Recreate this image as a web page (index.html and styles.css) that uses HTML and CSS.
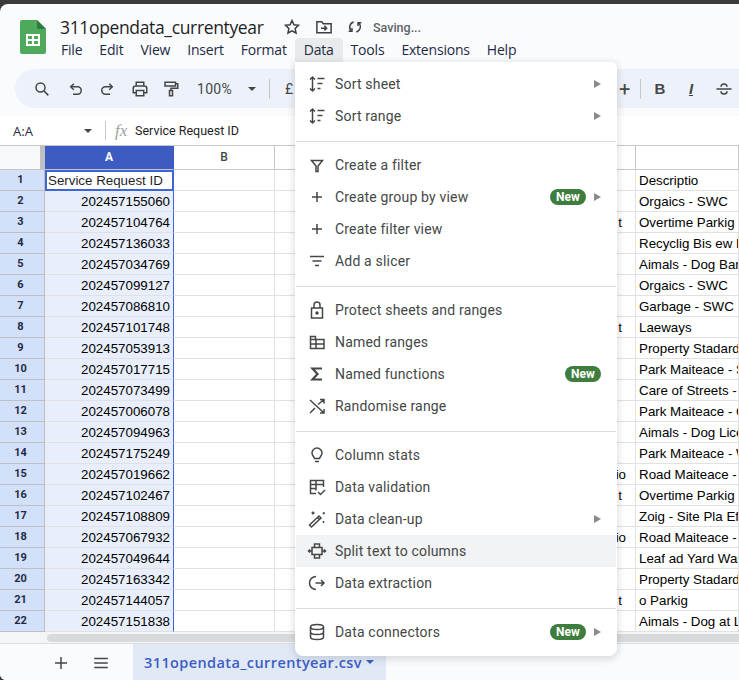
FILE: index.html
```html
<!DOCTYPE html>
<html lang="en">
<head>
    <meta charset="UTF-8">
    <meta name="viewport" content="width=device-width, initial-scale=1.0">
    <title>311opendata_currentyear</title>
    <link rel="stylesheet" href="styles.css">
</head>
<body>
<div class="app">
    <header class="topbar">
        <svg class="logo" width="26" height="34" viewBox="0 0 26 34">
            <path d="M2 0H17L26 9V32a2 2 0 0 1-2 2H2a2 2 0 0 1-2-2V2a2 2 0 0 1 2-2z" fill="#4ea95b"/>
            <path d="M17 0L26 9H19a2 2 0 0 1-2-2z" fill="#2c7a3f"/>
            <path d="M6 14H20V26H6zM8 16V19H12V16zM14 16V19H18V16zM8 21V24H12V21zM14 21V24H18V21z" fill="#fff" fill-rule="evenodd"/>
        </svg>
        <div class="topbar-text">
            <div class="title-row">
                <span class="doc-title">311opendata_currentyear</span>
                <svg class="star" width="18" height="18" viewBox="0 0 24 24" fill="none" stroke="#3c4043" stroke-width="2"><path d="M12 3.500l2.600 5.600 6.100.7-4.500 4.200 1.200 6-5.400-3-5.400 3 1.200-6-4.500-4.200 6.100-.7z"/></svg>
                <svg class="move" width="18" height="18" viewBox="0 0 24 24" fill="none" stroke="#3c4043" stroke-width="2"><path d="M2.500 19.500V5h6.500l2 2.500h10.500v12z"/><path d="M8 13.500h7M12.500 10.500l3 3-3 3"/></svg>
                <svg class="sync" width="16" height="16" viewBox="0 0 24 24" fill="none" stroke="#3c4043" stroke-width="2.200"><path d="M10 4.500a8 8 0 0 0-3.500 13.500M14 19.500a8 8 0 0 0 3.500-13.500"/><path d="M7.500 13.500v5h-5M16.500 10.500v-5h5"/></svg>
                <span class="saving">Saving...</span>
            </div>
            <nav class="menubar">
                <span>File</span>
                <span>Edit</span>
                <span>View</span>
                <span>Insert</span>
                <span>Format</span>
                <span class="active">Data</span>
                <span>Tools</span>
                <span>Extensions</span>
                <span>Help</span>
            </nav>
        </div>
    </header>

    <div class="toolbar">
        <span class="tool t-search"><svg width="20" height="20" viewBox="0 0 24 24" fill="none" stroke="#444746" stroke-width="2"><circle cx="10" cy="10" r="6"/><path d="M14.500 14.500L20.500 20.500"/></svg></span>
        <span class="tool t-undo"><svg width="18" height="18" viewBox="0 0 24 24" fill="none" stroke="#444746" stroke-width="2"><path d="M9 5L5 9l4 4"/><path d="M5 9h9a5 5 0 0 1 0 10H8"/></svg></span>
        <span class="tool t-redo"><svg width="18" height="18" viewBox="0 0 24 24" fill="none" stroke="#444746" stroke-width="2"><path d="M15 5l4 4-4 4"/><path d="M19 9h-9a5 5 0 0 0 0 10h6"/></svg></span>
        <span class="tool t-print"><svg width="18" height="18" viewBox="0 0 24 24" fill="none" stroke="#444746" stroke-width="2"><path d="M7 8V3h10v5M7 17H3v-6a3 3 0 0 1 3-3h12a3 3 0 0 1 3 3v6h-4"/><path d="M7 14h10v7H7z"/></svg></span>
        <span class="tool t-paint"><svg width="18" height="18" viewBox="0 0 24 24" fill="none" stroke="#444746" stroke-width="2"><path d="M4 3h14v5H4zM18 5h3v6h-9v3"/><path d="M10 14h4v7h-4z"/></svg></span>
        <span class="zoom-val">100%</span>
        <span class="caret"></span>
        <span class="tool-sep"></span>
        <span class="currency">£</span>
        <span class="toolbar-spacer"></span>
        <span class="tool-plus">+</span>
        <span class="tool-sep"></span>
        <span class="tool t-bold">B</span>
        <span class="tool t-italic">I</span>
        <span class="tool t-strike"><svg width="18" height="18" viewBox="0 0 24 24" fill="none" stroke="#444746" stroke-width="2"><path d="M2 12h20M8 9c0-5 8-5 8 0M8 15c0 5 8 5 8 0"/></svg></span>
    </div>

    <div class="formula-bar">
        <span class="name-box">A:A</span>
        <span class="caret"></span>
        <span class="formula-sep"></span>
        <span class="fx">fx</span>
        <span class="formula-text">Service Request ID</span>
    </div>

    <div class="grid">
        <div class="row head-row">
            <div class="corner"></div>
            <div class="col-a">A</div>
            <div class="col-b">B</div>
            <div class="col-c"></div>
            <div class="col-d"></div>
        </div>
        <div class="row first"><div class="num">1</div><div class="a selected">Service Request ID</div><div class="b"></div><div class="c"></div><div class="d">Descriptio</div></div>
        <div class="row"><div class="num">2</div><div class="a">202457155060</div><div class="b"></div><div class="c"></div><div class="d">Orgaics - SWC</div></div>
        <div class="row"><div class="num">3</div><div class="a">202457104764</div><div class="b"></div><div class="c">t</div><div class="d">Overtime Parkig</div></div>
        <div class="row"><div class="num">4</div><div class="a">202457136033</div><div class="b"></div><div class="c"></div><div class="d">Recyclig Bis ew Homes</div></div>
        <div class="row"><div class="num">5</div><div class="a">202457034769</div><div class="b"></div><div class="c"></div><div class="d">Aimals - Dog Barking</div></div>
        <div class="row"><div class="num">6</div><div class="a">202457099127</div><div class="b"></div><div class="c"></div><div class="d">Orgaics - SWC</div></div>
        <div class="row"><div class="num">7</div><div class="a">202457086810</div><div class="b"></div><div class="c"></div><div class="d">Garbage - SWC</div></div>
        <div class="row"><div class="num">8</div><div class="a">202457101748</div><div class="b"></div><div class="c">t</div><div class="d">Laeways</div></div>
        <div class="row"><div class="num">9</div><div class="a">202457053913</div><div class="b"></div><div class="c"></div><div class="d">Property Stadards</div></div>
        <div class="row"><div class="num">10</div><div class="a">202457017715</div><div class="b"></div><div class="c"></div><div class="d">Park Maiteace - Sports</div></div>
        <div class="row"><div class="num">11</div><div class="a">202457073499</div><div class="b"></div><div class="c"></div><div class="d">Care of Streets - Other</div></div>
        <div class="row"><div class="num">12</div><div class="a">202457006078</div><div class="b"></div><div class="c"></div><div class="d">Park Maiteace - Grass</div></div>
        <div class="row"><div class="num">13</div><div class="a">202457094963</div><div class="b"></div><div class="c"></div><div class="d">Aimals - Dog Licence</div></div>
        <div class="row"><div class="num">14</div><div class="a">202457175249</div><div class="b"></div><div class="c"></div><div class="d">Park Maiteace - Water</div></div>
        <div class="row"><div class="num">15</div><div class="a">202457019662</div><div class="b"></div><div class="c wide">io</div><div class="d">Road Maiteace - Other</div></div>
        <div class="row"><div class="num">16</div><div class="a">202457102467</div><div class="b"></div><div class="c">t</div><div class="d">Overtime Parkig</div></div>
        <div class="row"><div class="num">17</div><div class="a">202457108809</div><div class="b"></div><div class="c"></div><div class="d">Zoig - Site Pla Effect</div></div>
        <div class="row"><div class="num">18</div><div class="a">202457067932</div><div class="b"></div><div class="c wide">io</div><div class="d">Road Maiteace - Other</div></div>
        <div class="row"><div class="num">19</div><div class="a">202457049644</div><div class="b"></div><div class="c"></div><div class="d">Leaf ad Yard Waste</div></div>
        <div class="row"><div class="num">20</div><div class="a">202457163342</div><div class="b"></div><div class="c"></div><div class="d">Property Stadards</div></div>
        <div class="row"><div class="num">21</div><div class="a">202457144057</div><div class="b"></div><div class="c">t</div><div class="d">o Parkig</div></div>
        <div class="row"><div class="num">22</div><div class="a">202457151838</div><div class="b"></div><div class="c"></div><div class="d">Aimals - Dog at Large</div></div>
    </div>

    <div class="scrollbar"><div class="thumb"></div></div>

    <footer class="tabs">
        <svg class="add-sheet" width="18" height="18" viewBox="0 0 24 24" fill="none" stroke="#444746" stroke-width="2"><path d="M12 4v16M4 12h16"/></svg>
        <svg class="all-sheets" width="18" height="18" viewBox="0 0 24 24" fill="none" stroke="#444746" stroke-width="2"><path d="M3 6h18M3 12h18M3 18h18"/></svg>
        <div class="tab"><span>311opendata_currentyear.csv</span><i class="tab-caret"></i></div>
    </footer>

    <div class="menu">
        <div class="item">
            <svg viewBox="0 0 20 20"><path d="M5.500 3v14M3 5.500L5.500 3 8 5.500M3 14.500L5.500 17 8 14.500M10.500 4.500h7M10.500 9.500h5M10.500 14.500h3"/></svg>
            <span class="label">Sort sheet</span><i class="arrow"></i>
        </div>
        <div class="item">
            <svg viewBox="0 0 20 20"><path d="M5.500 3v14M3 5.500L5.500 3 8 5.500M3 14.500L5.500 17 8 14.500M10.500 4.500h7M10.500 9.500h5M10.500 14.500h3"/></svg>
            <span class="label">Sort range</span><i class="arrow"></i>
        </div>
        <hr>
        <div class="item">
            <svg viewBox="0 0 20 20"><path d="M4.500 5.500h11L11 11v5.500H9V11z"/></svg>
            <span class="label">Create a filter</span>
        </div>
        <div class="item">
            <svg viewBox="0 0 20 20"><path d="M10 5v10M5 10h10"/></svg>
            <span class="label">Create group by view</span><b class="badge">New</b><i class="arrow"></i>
        </div>
        <div class="item">
            <svg viewBox="0 0 20 20"><path d="M10 5v10M5 10h10"/></svg>
            <span class="label">Create filter view</span>
        </div>
        <div class="item">
            <svg viewBox="0 0 20 20"><path d="M3 5.500h14M5.500 10h9M8 14.500h4"/></svg>
            <span class="label">Add a slicer</span>
        </div>
        <hr>
        <div class="item">
            <svg viewBox="0 0 20 20"><path d="M4.500 8h11v10h-11zM7 8V5a3 3 0 0 1 6 0v3"/><circle cx="10" cy="13" r="1" fill="#444746"/></svg>
            <span class="label">Protect sheets and ranges</span>
        </div>
        <div class="item">
            <svg viewBox="0 0 20 20"><path d="M3.500 4.500h5v3h8.500v9H3.500zM3.500 7.500h5M3.500 12h13.500M9 7.500v9"/></svg>
            <span class="label">Named ranges</span>
        </div>
        <div class="item">
            <svg viewBox="0 0 20 20"><path class="thick" d="M15 4.500H5.500L10.500 10l-5 5.500H15"/></svg>
            <span class="label">Named functions</span><b class="badge end">New</b>
        </div>
        <div class="item">
            <svg viewBox="0 0 20 20"><path d="M3 4l14 13M3 17l5-5M11 8.500L17 3.500M13 3.500h4v4M17 13v4h-4"/></svg>
            <span class="label">Randomise range</span>
        </div>
        <hr>
        <div class="item">
            <svg viewBox="0 0 20 20"><path d="M7.500 13.500c0-1.500-2.500-2.500-2.500-5.500a5 5 0 0 1 10 0c0 3-2.500 4-2.500 5.500zM8 16.500h4"/></svg>
            <span class="label">Column stats</span>
        </div>
        <div class="item">
            <svg viewBox="0 0 20 20"><path d="M9 16.500H3.500v-13h13V10M3.500 7.500h13M3.500 11.500h6M9 3.500v10M11 15l2.500 2.500 4.500-4.500"/></svg>
            <span class="label">Data validation</span>
        </div>
        <div class="item">
            <svg viewBox="0 0 20 20"><path d="M2.500 16L12 7l2 2-9.500 9z"/><path d="M10.500 8.500l2 2M6 2.500v3M4.500 4h3M16 3.500l1.500 1.500M17.500 3.500L16 5M16.500 12v2"/></svg>
            <span class="label">Data clean-up</span><i class="arrow"></i>
        </div>
        <div class="item hover">
            <svg viewBox="0 0 20 20"><path d="M7.500 6.500V3h5v3.500M7.500 13.500V17h5v-3.500M7.500 6.500H5v7h2.500M12.500 6.500H15v7h-2.500M7.500 6.500h5M7.500 13.500h5M5 10H1.500M3 8.500L1.500 10 3 11.500M15 10h3.500M17 8.500l1.500 1.500-1.500 1.500"/></svg>
            <span class="label">Split text to columns</span>
        </div>
        <div class="item">
            <svg viewBox="0 0 20 20"><path d="M9 3.500a6.500 6.500 0 0 0 0 13M8.500 10h8.500M14 7l3 3-3 3"/></svg>
            <span class="label">Data extraction</span>
        </div>
        <hr>
        <div class="item">
            <svg viewBox="0 0 20 20"><ellipse cx="10" cy="5" rx="6.500" ry="2.500"/><path d="M3.500 5v10c0 1.400 3 2.500 6.500 2.500s6.500-1.100 6.500-2.500V5M3.500 10c0 1.400 3 2.500 6.500 2.500s6.500-1.100 6.500-2.500"/></svg>
            <span class="label">Data connectors</span><b class="badge">New</b><i class="arrow"></i>
        </div>
    </div>
</div>
</body>
</html>
```

FILE: styles.css
```css
* {
    box-sizing: border-box;
}
html, body {
    margin: 0;
    height: 100%;
    background: #3b3b3b;
    overflow: hidden;
}
.app {
    position: relative;
    margin-top: 4px;
    height: 676px;
    display: flex;
    flex-direction: column;
    background: #f9fbfd;
    border-radius: 8px 0 0 6px;
    overflow: hidden;
    font-family: Roboto, "Liberation Sans", sans-serif;
    color: #1f1f1f;
}

/* title + menus */
.topbar {
    height: 65px;
    padding: 15px 0 0 20px;
    display: flex;
}
.logo {
    flex: none;
    margin-top: 1px;
}
.topbar-text {
    margin-left: 14px;
}
.title-row {
    display: flex;
    align-items: center;
    height: 16px;
}
.doc-title {
    font-family: "Open Sans", sans-serif;
    font-size: 17.500px;
    letter-spacing: -.35px;
    width: 204px;
    white-space: nowrap;
}
.star {
    margin-left: 19px;
}
.move {
    margin-left: 14px;
}
.sync {
    margin-left: 14px;
}
.saving {
    margin-left: 10px;
    font-size: 12.500px;
    color: #5f6368;
    font-weight: 500;
}
.menubar {
    display: flex;
    margin-top: 3px;
    margin-left: -8px;
    font-family: "Open Sans", sans-serif;
    font-size: 14px;
    color: #1f2a44;
}
.menubar span {
    height: 24px;
    line-height: 24px;
    padding: 0 9px;
    margin-right: -1px;
    border-radius: 4px 4px 0 0;
    letter-spacing: -.2px;
}
.menubar .active {
    background: #e8eaed;
}

/* toolbar */
.toolbar {
    height: 39px;
    margin-left: 15px;
    background: #edf2fa;
    border-radius: 20px 0 0 20px;
    display: flex;
    align-items: center;
    color: #444746;
    flex: none;
}
.tool {
    width: 18px;
    height: 20px;
    display: flex;
    align-items: center;
    justify-content: center;
    flex: none;
}
.t-search {
    margin-left: 18px;
}
.t-undo {
    margin-left: 16px;
}
.t-redo {
    margin-left: 13px;
}
.t-print {
    margin-left: 15px;
}
.t-paint {
    margin-left: 13px;
}
.zoom-val {
    margin-left: 17px;
    font-size: 14px;
    color: #444746;
    letter-spacing: .3px;
}
.caret {
    width: 0;
    height: 0;
    border-left: 4px solid transparent;
    border-right: 4px solid transparent;
    border-top: 4px solid #444746;
    flex: none;
}
.toolbar .caret {
    margin-left: 16px;
}
.tool-sep {
    width: 1px;
    height: 20px;
    background: #c7c7c7;
    margin-left: 13px;
    flex: none;
}
.currency {
    margin-left: 15px;
    font-size: 14px;
}
.toolbar-spacer {
    flex: 1;
}
.tool-plus {
    font-size: 20px;
    line-height: 20px;
    width: 14px;
}
.tool-plus + .tool-sep {
    margin-left: 7px;
}
.t-bold {
    margin-left: 10px;
    font-family: "Liberation Sans", sans-serif;
    font-weight: 700;
    font-size: 15px;
}
.t-italic {
    margin-left: 13px;
    font-family: "Liberation Sans", sans-serif;
    font-weight: 700;
    font-style: italic;
    font-size: 15px;
    text-decoration: underline;
    text-underline-offset: 1px;
}
.t-strike {
    margin-left: 15px;
    margin-right: 6px;
}

/* formula bar */
.formula-bar {
    height: 30px;
    margin-top: 8px;
    background: #fff;
    display: flex;
    align-items: center;
    border-bottom: 1px solid #c7c7c7;
    flex: none;
}
.name-box {
    margin-left: 13px;
    width: 71px;
    font-size: 13px;
    color: #1f2a44;
    font-family: "Open Sans", sans-serif;
}
.formula-sep {
    width: 1px;
    height: 19px;
    background: #c7c7c7;
    margin-left: 13px;
}
.fx {
    margin-left: 9px;
    font-family: "Liberation Serif", serif;
    font-style: italic;
    font-size: 17px;
    color: #a0a0a0;
    width: 20px;
}
.formula-text {
    font-size: 12.500px;
    color: #1f1f1f;
}

/* sheet */
.grid {
    background: #fff;
    flex: none;
}
.row {
    display: flex;
    height: 21px;
    font-family: "Liberation Sans", sans-serif;
    font-size: 13.330px;
    line-height: 21px;
    color: #000;
}
.row > div {
    border-bottom: 1px solid #e1e1e1;
    border-right: 1px solid #e1e1e1;
    flex: none;
    white-space: nowrap;
    overflow: hidden;
}
.row.first {
    height: 21px;
}
.head-row {
    height: 24px;
    font-family: Roboto, sans-serif;
    font-size: 11px;
    font-weight: 500;
    line-height: 23px;
    text-align: center;
    color: #444746;
}
.head-row > div {
    border-bottom: 1px solid #c7c7c7;
    border-right: 1px solid #c7c7c7;
}
.row .corner {
    width: 45px;
    background: #f8f9fa;
    border-right: 5px solid #c0c0c0;
}
.row .col-a {
    width: 129px;
    background: #3c5cc4;
    color: #fff;
    font-weight: 700;
    border-right-color: #3c5cc4;
    font-size: 12px;
}
.row .col-b,
.b {
    width: 101px;
}
.row .col-c,
.c {
    width: 361px;
}
.row .col-d,
.d {
    flex: 1 !important;
    min-width: 0;
}
.row .col-b {
    font-size: 12px;
}
.row .num {
    width: 45px;
    background: #d3e0fa;
    border-right: 1px solid #c0c0c0;
    border-bottom-color: #c0c0c0;
    text-align: center;
    font-family: Roboto, sans-serif;
    font-size: 11px;
    line-height: 20px;
    font-weight: 700;
    padding-right: 3px;
    color: #1f2a44;
}
.row .a {
    width: 129px;
    background: #e8eefb;
    text-align: right;
    padding-right: 3px;
    border-right: 1px solid #3c66d6;
}
.row .selected {
    background: #fff;
    text-align: left;
    border: 2px solid #3c66d6;
    line-height: 17px;
    padding-left: 1px;
    color: #1f1f1f;
}
.row .c {
    text-align: right;
    padding-right: 13px;
}
.row .c.wide {
    padding-right: 9px;
}
.row .d {
    padding-left: 3px;
}

.scrollbar {
    height: 12px;
    padding: 2px 0 1px 47px;
    background: #f4f5f6;
    border-bottom: 1px solid #dadce0;
    flex: none;
}
.thumb {
    height: 100%;
    background: #d9dadc;
    border-radius: 5px 0 0 5px;
}

/* sheet tabs */
.tabs {
    flex: 1;
    display: flex;
    align-items: stretch;
    background: #f9fbfd;
}
.add-sheet {
    margin: 10px 0 0 52px;
}
.all-sheets {
    margin: 10px 0 0 22px;
}
.tab {
    margin-left: 23px;
    width: 253px;
    background: #e1e9f7;
    display: flex;
    align-items: center;
    padding-left: 11px;
    font-family: "Open Sans", sans-serif;
    font-weight: 600;
    font-size: 14.500px;
    letter-spacing: .4px;
    color: #3c5cc4;
    white-space: nowrap;
}
.tab-caret {
    margin-left: 4px;
    border-left: 4px solid transparent;
    border-right: 4px solid transparent;
    border-top: 4px solid #3c5cc4;
}

/* open Data menu */
.menu {
    position: absolute;
    left: 295px;
    top: 58px;
    width: 322px;
    height: 594px;
    background: #fff;
    border-radius: 0 6px 8px 8px;
    box-shadow: 0 2px 6px 2px rgba(60, 64, 67, .15);
    padding: 6px 1px 8px;
    font-family: Roboto, sans-serif;
    font-size: 14px;
    letter-spacing: .18px;
    color: #444746;
}
.item {
    height: 32px;
    display: flex;
    align-items: center;
    padding-left: 11px;
    padding-right: 15px;
}
.item.hover {
    background: #f1f3f4;
}
.item svg {
    width: 20px;
    height: 20px;
    flex: none;
    fill: none;
    stroke: #444746;
    stroke-width: 1.500;
}
.item svg .thick {
    stroke-width: 2.200;
}
.label {
    margin-left: 8px;
    flex: 1;
}
.arrow {
    width: 0;
    height: 0;
    margin-left: 8px;
    border-top: 4px solid transparent;
    border-bottom: 4px solid transparent;
    border-left: 7px solid #8a8a8a;
}
.badge {
    width: 36px;
    height: 16px;
    border-radius: 8px;
    background: #3f7d3f;
    color: #fff;
    font-size: 12px;
    line-height: 16px;
    text-align: center;
    font-weight: 700;
    letter-spacing: 0;
}
.badge.end {
    margin-right: 0;
}
.menu hr {
    border: 0;
    border-top: 1px solid #dadce0;
    margin: 9px 0 7px;
    height: 0;
}
```
